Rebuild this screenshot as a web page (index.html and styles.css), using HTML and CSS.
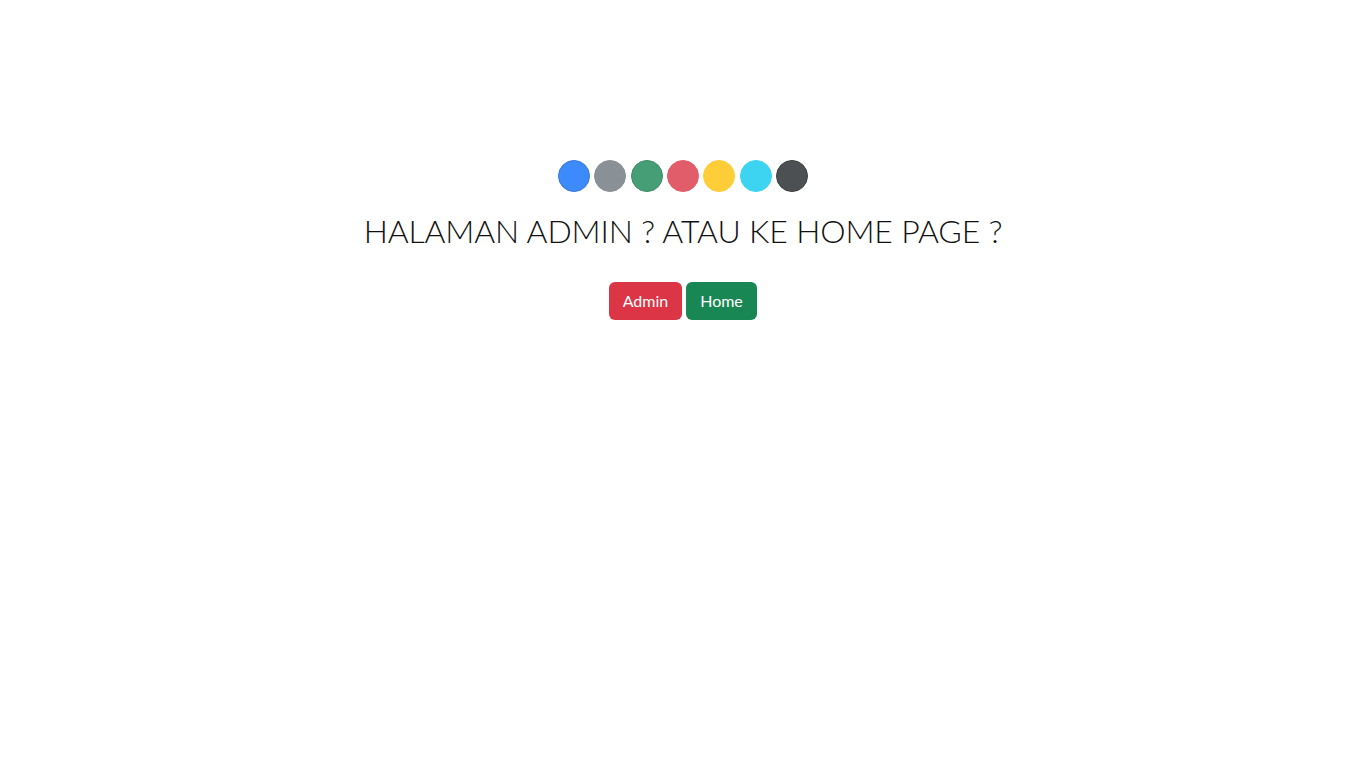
FILE: index.html
```html
<!DOCTYPE html>
<html lang="id">
<head>
<meta charset="utf-8">
<title>Pilih Halaman</title>
<link rel="stylesheet" href="styles.css">
</head>
<body>
<main class="page">
  <div class="dots">
    <span class="dot dot-primary"></span>
    <span class="dot dot-secondary"></span>
    <span class="dot dot-success"></span>
    <span class="dot dot-danger"></span>
    <span class="dot dot-warning"></span>
    <span class="dot dot-info"></span>
    <span class="dot dot-dark"></span>
  </div>
  <h1 class="title">HALAMAN ADMIN ? ATAU KE HOME PAGE ?</h1>
  <div class="actions">
    <a class="btn btn-admin" href="#">Admin</a>
    <a class="btn btn-home" href="#">Home</a>
  </div>
</main>
</body>
</html>
```
FILE: styles.css
```css
* { box-sizing: border-box; }
html, body { margin: 0; padding: 0; background: #fff; }
body {
  font-family: "Lato", "Open Sans", sans-serif;
  color: #212529;
}
.page {
  display: flex;
  flex-direction: column;
  align-items: center;
  padding-top: 160px;
}
.dots {
  display: flex;
  gap: 4.3px;
}
.dot {
  width: 32px;
  height: 32px;
  border-radius: 50%;
  opacity: 0.8;
  border: 1px solid;
}
.dot-primary { background: #0d6efd; border-color: #0a58ca; }
.dot-secondary { background: #6c757d; border-color: #6c757d; }
.dot-success { background: #198754; border-color: #146c43; }
.dot-danger { background: #dc3545; border-color: #dc3545; }
.dot-warning { background: #ffc107; border-color: #ffc107; }
.dot-info { background: #0dcaf0; border-color: #0dcaf0; }
.dot-dark { background: #212529; border-color: #111; }
.title {
  margin: 19px 0 0;
  font-weight: 300;
  font-size: 32px;
  line-height: 40px;
  letter-spacing: -0.15px;
  color: #111;
}
.actions {
  display: flex;
  gap: 4px;
  margin-top: 31px;
}
.btn {
  display: flex;
  align-items: center;
  justify-content: center;
  height: 38px;
  padding-bottom: 1px;
  border-radius: 6px;
  color: #fff;
  text-decoration: none;
  font-size: 16px;
}
.btn-admin { width: 73px; background: #dc3545; }
.btn-home { width: 71px; background: #198754; }
```
